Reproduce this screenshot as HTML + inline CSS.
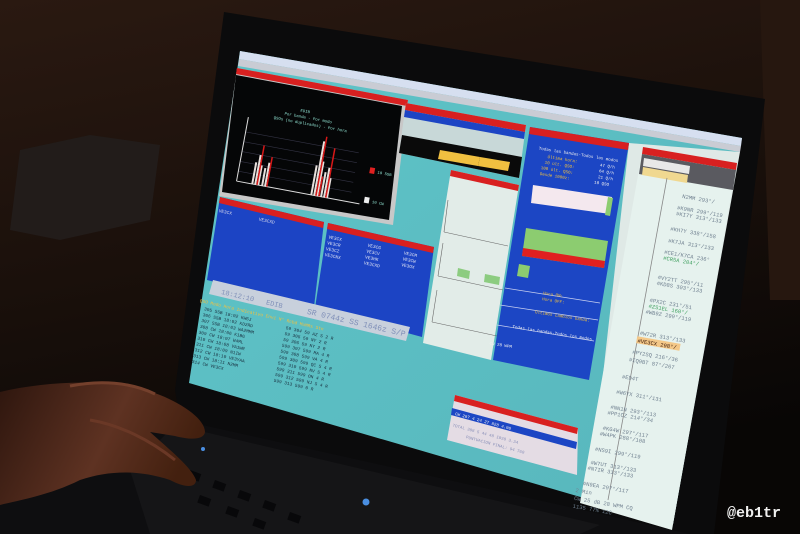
<!DOCTYPE html>
<html><head><meta charset="utf-8"><style>
html,body{margin:0;padding:0;background:#120b08;}
svg{display:block;}
text{font-family:"Liberation Mono",monospace;}
</style></head><body>
<svg width="800" height="534" viewBox="0 0 800 534" xmlns="http://www.w3.org/2000/svg">
<defs>
<linearGradient id="bg" x1="0" y1="0" x2="0.3" y2="1">
<stop offset="0" stop-color="#2a1911"/><stop offset="0.5" stop-color="#1a100b"/><stop offset="1" stop-color="#080605"/>
</linearGradient>
<linearGradient id="skin" x1="0" y1="0" x2="1" y2="0.3">
<stop offset="0" stop-color="#2e160e"/><stop offset="0.6" stop-color="#5e3222"/><stop offset="1" stop-color="#43200f"/>
</linearGradient>
<linearGradient id="teal" x1="0" y1="0" x2="1" y2="1">
<stop offset="0" stop-color="#5ec4c8"/><stop offset="1" stop-color="#58b6bc"/>
</linearGradient>
</defs>
<rect width="800" height="534" fill="url(#bg)"/>
<polygon points="760,0 800,0 800,300 770,300" fill="#26170f"/>
<polygon points="20,150 90,135 160,145 150,220 60,240 10,230" fill="#221c1a"/>
<!-- laptop base -->
<polygon points="150,400 714,534 0,534 0,470" fill="#0e0e10"/>
<polygon points="175,425 600,525 580,534 150,534 130,470" fill="#151517"/>
<g fill="#08080a">
<rect x="190" y="470" width="12" height="8" transform="rotate(20 190 470)"/>
<rect x="215" y="480" width="12" height="8" transform="rotate(20 215 480)"/>
<rect x="240" y="490" width="12" height="8" transform="rotate(20 240 490)"/>
<rect x="265" y="500" width="12" height="8" transform="rotate(20 265 500)"/>
<rect x="290" y="512" width="12" height="8" transform="rotate(20 290 512)"/>
<rect x="200" y="495" width="12" height="8" transform="rotate(20 200 495)"/>
<rect x="228" y="506" width="12" height="8" transform="rotate(20 228 506)"/>
<rect x="255" y="518" width="12" height="8" transform="rotate(20 255 518)"/>
</g>
<circle cx="366" cy="502" r="3.5" fill="#4a8ee0"/>
<circle cx="203" cy="449" r="2" fill="#4a8ee0"/>
<!-- bezel -->
<polygon points="224,12 765,99 714,534 690,534 180,420 175,390" fill="#0b0b0c"/>
<!-- screen -->
<polygon points="240,51 742,138 673,524 189,383" fill="url(#teal)"/>
<polygon points="240,51 742,138 741,146 239,59" fill="#d6dff0"/>
<polygon points="239,59 741,146 740,152 238,66" fill="#c9ccd4"/>
<polygon points="629,143 740,152 673,524 589,500" fill="#dfe9e6"/>
<!-- stats window -->
<polygon points="237,68 408,100 393,225 219,196" fill="#c8c8c8"/>
<polygon points="237,68 408,100 407,106 236,74" fill="#d82020"/>
<polygon points="236,75 402,106 389,220 222,192" fill="#050607"/>
<g transform="rotate(10.5 240 80)">
<text x="305" y="100" font-size="4" fill="#8fe0d0">EDIB</text>
<text x="290" y="106" font-size="4" fill="#8fe0d0">Por banda - Por modo</text>
<text x="280" y="112" font-size="4" fill="#8fe0d0">QSOs (no duplicados) - Por hora</text>
<g stroke="#334" stroke-width="0.6">
<line x1="255" y1="130" x2="370" y2="130"/><line x1="255" y1="140" x2="370" y2="140"/><line x1="255" y1="150" x2="370" y2="150"/><line x1="255" y1="160" x2="370" y2="160"/><line x1="255" y1="170" x2="370" y2="170"/>
</g>
<line x1="255" y1="115" x2="255" y2="180" stroke="#ddd" stroke-width="1"/>
<line x1="255" y1="180" x2="380" y2="180" stroke="#ddd" stroke-width="1"/>
<g fill="#e8e0dc">
<rect x="270" y="158" width="2" height="22"/><rect x="273" y="150" width="2" height="30"/><rect x="276" y="160" width="2" height="20"/><rect x="280" y="162" width="2" height="18"/><rect x="283" y="156" width="2" height="24"/>
<rect x="330" y="150" width="2" height="30"/><rect x="333" y="125" width="2" height="55"/><rect x="336" y="145" width="2" height="35"/><rect x="340" y="155" width="2" height="25"/><rect x="343" y="150" width="2" height="30"/><rect x="346" y="160" width="2" height="20"/>
</g>
<g fill="#d81818">
<rect x="275" y="140" width="1.5" height="40"/><rect x="285" y="150" width="1.5" height="30"/><rect x="335" y="120" width="1.5" height="60"/><rect x="345" y="130" width="1.5" height="50"/><rect x="338" y="160" width="1.5" height="20"/>
</g>
<rect x="384" y="142" width="5" height="6" fill="#e02020"/><text x="392" y="147" font-size="4" fill="#8fe0d0">10 SSB</text>
<rect x="384" y="172" width="5" height="6" fill="#eee"/><text x="392" y="177" font-size="4" fill="#8fe0d0">10 CW</text>
</g>
<!-- blue window 1 -->
<polygon points="220,197 324,222 314,307 207,280" fill="#1c44c4"/>
<polygon points="220,197 324,222 323,228 219,203" fill="#d82020"/>
<g transform="rotate(12 220 200)" fill="#dde" font-size="4.5">
<text x="221" y="212">VE3CX</text><text x="262" y="212">VE3CXD</text>
</g>
<!-- blue window 2 -->
<polygon points="328,223 434,247 422,337 315,308" fill="#1c44c4"/>
<polygon points="328,223 434,247 433,253 327,229" fill="#d82020"/>
<g transform="rotate(12 328 230)" fill="#e0e4f4" font-size="4.5">
<text x="330" y="238">VE3CX</text><text x="330" y="244">VE3CR</text><text x="330" y="250">VE3CZ</text><text x="330" y="256">VE3CNX</text>
<text x="370" y="238">VE3CG</text><text x="370" y="244">VE3CV</text><text x="370" y="250">VE3HK</text><text x="370" y="256">VE3CXD</text>
<text x="407" y="238">VE3CM</text><text x="407" y="244">VE3CW</text><text x="407" y="250">VE3OX</text>
</g>
<!-- grey band -->
<polygon points="213,280 410,327 406,341 209,294" fill="#c8d0dc"/>
<g transform="rotate(13 213 288)" font-size="7" fill="#8090b8">
<text x="222" y="292">18:12:10</text><text x="268" y="292">EDIB</text><text x="310" y="292" font-size="8">SR 0744z SS 1646z S/P</text>
</g>
<g transform="rotate(13 200 300)" font-size="4.5">
<text x="200" y="302" fill="#f0c040">QSO  Modo Hora   Indicativo   Envi N°   Rcbd   MuMRs  Stn</text>
<g fill="#1a3040">
<text x="206" y="309">305  SSB 18:02 KW6J</text><text x="206" y="315">306  SSB 18:02 KD2RD</text><text x="206" y="321">307  SSB 18:03 WA2MMM</text><text x="206" y="327">308  CW  18:06 K1BG</text><text x="206" y="333">309  CW  18:07 W4ML</text><text x="206" y="339">310  CW  18:08 VA1WR</text><text x="206" y="345">311  CW  18:09 N1IW</text><text x="206" y="351">312  CW  18:10 VE3YAA</text><text x="206" y="357">313  CW  18:11 N2MM</text><text x="206" y="363">314  CW         VE3CX</text>
<text x="290" y="309">59   304 59 AZ    S 2 R</text><text x="290" y="315">59   305 59 NY      2 R</text><text x="290" y="321">59   306 59 NY      2 R</text><text x="290" y="327">599  307 599 MA     4 R</text><text x="290" y="333">599  308 599 VA     4 R</text><text x="290" y="339">599  309 599 QC   S 4 R</text><text x="290" y="345">599  310 599 NV   S 4 R</text><text x="290" y="351">599  311 599 ON     4 R</text><text x="290" y="357">599  312 599 NJ   S 4 R</text><text x="290" y="363">599  313 599        0 R</text>
</g></g>
<!-- Comprueba multi -->
<polygon points="406,103 526,125 519,178 399,153" fill="#c8d8d8"/>
<polygon points="406,103 526,125 525,132 405,110" fill="#d82020"/>
<polygon points="405,110 525,132 524,139 404,117" fill="#1c44c4"/>
<polygon points="402,135 522,157 519,178 399,153" fill="#0a0a0a"/>
<polygon points="440,150 480,157 478,166 438,159" fill="#f0c040"/>
<polygon points="480,157 510,162 508,171 478,166" fill="#f0c040"/>
<!-- solar -->
<polygon points="451,170 519,185 491,360 423,343" fill="#e2ece8"/>
<polygon points="451,170 519,185 518,191 450,176" fill="#d82020"/>
<g stroke="#666" stroke-width="0.6">
<line x1="448" y1="200" x2="444" y2="232"/><line x1="444" y1="232" x2="508" y2="246"/>
<line x1="443" y1="243" x2="438" y2="276"/><line x1="438" y1="276" x2="503" y2="290"/>
<line x1="437" y1="290" x2="432" y2="322"/><line x1="432" y1="322" x2="497" y2="336"/>
</g>
<polygon points="458,268 470,271 469,279 457,276" fill="#8ccc80"/><polygon points="485,274 500,277 499,285 484,282" fill="#8ccc80"/>
<!-- big blue panel -->
<polygon points="530,127 629,143 589,380 493,360" fill="#1c46c4"/>
<polygon points="530,127 629,143 628,150 529,134" fill="#d82020"/>
<g transform="rotate(9 530 140)" font-size="4.2" fill="#f0f0f0">
<text x="540" y="148">Todas las bandas-Todos los modos</text>
<text x="550" y="155" fill="#f0c040">Última hora:</text><text x="603" y="155">47 Q/h</text>
<text x="548" y="161" fill="#f0c040">10 últ. QSO:</text><text x="603" y="161">64 Q/h</text>
<text x="545" y="167" fill="#f0c040">100 últ. QSO:</text><text x="603" y="167">21 Q/h</text>
<text x="545" y="173" fill="#f0c040">Desde 1000z:</text><text x="600" y="173">10 QSO</text>
</g>
<polygon points="533,185 612,197 610,214 531,203" fill="#f4e8ee"/>
<polygon points="608,197 613,198 610,216 605,215" fill="#8ccc70"/>
<polygon points="526,228 608,241 604,268 522,256" fill="#8ccc70"/>
<polygon points="523,248 605,261 604,268 522,256" fill="#e02020"/>
<polygon points="519,264 530,266 528,278 517,276" fill="#8ccc70"/>
<g stroke="#c8d0f0" stroke-width="0.7">
<line x1="505" y1="288" x2="600" y2="303"/><line x1="500" y1="305" x2="598" y2="320"/><line x1="497" y1="325" x2="594" y2="341"/>
</g>
<g transform="rotate(9 530 280)" font-size="4.2" fill="#f0c040">
<text x="545" y="292">Hora ON:</text><text x="545" y="298">Hora OFF:</text>
<text x="540" y="312">Últimos cambios banda:</text>
<text x="520" y="330" fill="#f0f0f0">Todas las bandas-Todos los modos</text>
<text x="500" y="350" fill="#f0f0f0">CW 28 WPM</text>
</g>
<!-- radio panel -->
<polygon points="643,147 737,163 672,530 580,503" fill="#e6f2ee"/>
<polygon points="643,147 737,163 736,170 642,154" fill="#d82020"/>
<polygon points="642,154 736,170 733,190 639,174" fill="#5a5a60"/>
<polygon points="644,158 690,166 689,174 643,166" fill="#e8e8e8"/>
<polygon points="643,167 688,175 687,183 642,175" fill="#f0d890"/>
<line x1="667" y1="178" x2="608" y2="500" stroke="#888" stroke-width="0.8"/>
<g transform="rotate(10 660 190)" font-size="5.5" fill="#708090">
<text x="683" y="194">N2MM 293°/</text>
<text x="680" y="206">#K9NR 299°/119</text><text x="680" y="212">#KI7Y 313°/133</text>
<text x="677" y="228">#KH7Y 338°/158</text><text x="677" y="240">#K7JA 313°/133</text>
<text x="675" y="252">#CE1/K7CA 236°</text><text x="675" y="258" fill="#40a060">#CR5A 204°/</text>
<text x="673" y="278">#VY2TT 295°/11</text><text x="673" y="284">#KD8S 303°/133</text>
<text x="669" y="302">#PX2C 231°/51</text><text x="669" y="308" fill="#40a060">#ZS1EL 160°/</text>
<text x="667" y="314">#WB9Z 299°/119</text>
<text x="665" y="336">#W72R 313°/133</text>
<rect x="663" y="338" width="44" height="7" fill="#f4c888"/>
<text x="664" y="344" fill="#402010">#VE3CX 298°/</text>
<text x="661" y="356">#PY2SQ 216°/36</text><text x="659" y="364">#IQ9BT 87°/267</text>
<text x="655" y="382">#ED4T</text><text x="652" y="398">#W6YX 311°/131</text>
<text x="649" y="414">#NN1N 293°/113</text><text x="647" y="420">#PP1CZ 214°/34</text>
<text x="645" y="436">#KG4W 297°/117</text><text x="643" y="442">#W4PK 288°/108</text>
<text x="641" y="458">#NS9I 299°/119</text><text x="639" y="472">#W7UT 313°/133</text><text x="637" y="478">#N7IR 313°/133</text>
<text x="635" y="494">#N9EA 297°/117</text>
<text x="629" y="502">2 Min</text><text x="629" y="510">CW  25 dB 28 WPM CQ</text><text x="629" y="518">1135  77%  12C</text>
</g>
<!-- resumen -->
<polygon points="455,395 578,428 577,475 447,440" fill="#e4dce4"/>
<polygon points="455,395 578,428 577,434 454,401" fill="#d82020"/>
<polygon points="452,408 577,442 576,449 451,415" fill="#1c46c4"/>
<g transform="rotate(15 452 410)" font-size="4.2" fill="#f0f0f0"><text x="456" y="414">CW   207   4  24   27    828  4.00</text></g>
<g transform="rotate(15 452 420)" font-size="4.2" fill="#8a90b8"><text x="454" y="426">TOTAL 308 5 44 48 1030 3.34</text><text x="470" y="434">PUNTUACION FINAL: 94 760</text></g>
<!-- hand -->
<path d="M0,392 C50,380 120,378 160,395 C185,405 205,420 205,432 C204,440 190,440 175,436 L150,432 C170,450 192,468 196,480 C196,488 185,488 170,480 C140,470 110,470 80,480 C50,495 20,500 0,505 Z" fill="url(#skin)"/>
<path d="M70,386 C100,380 130,382 155,394" stroke="#74402c" stroke-width="3" fill="none"/>
<path d="M90,420 C120,425 150,440 175,460" stroke="#6a3826" stroke-width="3" fill="none"/>
<text x="727" y="517" font-family="Liberation Sans, sans-serif" font-size="15" font-weight="bold" fill="#f0f0f0">@eb1tr</text>
</svg>
</body></html>
